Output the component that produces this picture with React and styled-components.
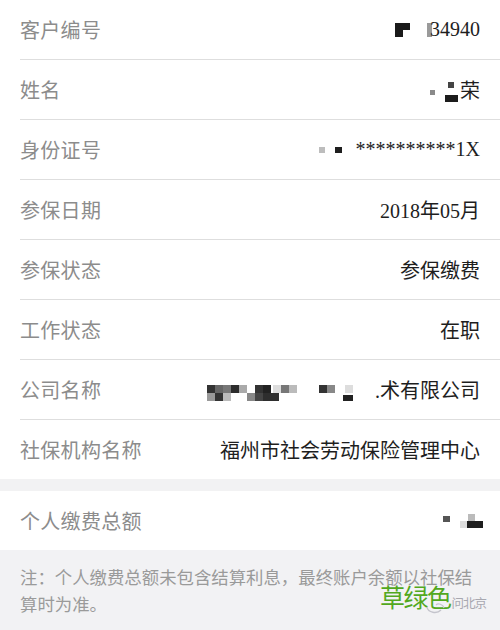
import React from 'react';
import styled, { createGlobalStyle } from 'styled-components';

const GlobalStyle = createGlobalStyle`
  html, body {
    margin: 0;
    padding: 0;
    background: #ffffff;
  }
  body {
    font-family: "Noto Sans CJK SC", "Noto Sans", sans-serif;
  }
`;

const Page = styled.div`
  position: relative;
  width: 500px;
  height: 630px;
  overflow: hidden;
  background: #f2f2f4;
`;

const List = styled.div`
  background: #ffffff;
  display: flex;
  flex-direction: column;
`;

const Row = styled.div`
  height: ${(props) => props.h || 59}px;
  margin-left: 20px;
  padding-right: 20px;
  display: flex;
  align-items: center;
  justify-content: space-between;
  border-bottom: ${(props) => (props.last ? '0' : '1px solid #dedede')};
`;

const Label = styled.span`
  font-size: 20px;
  color: #8c8c8c;
  letter-spacing: 0.3px;
`;

const Value = styled.span`
  display: flex;
  align-items: center;
  font-family: "Liberation Serif", "Noto Sans CJK SC", serif;
  font-size: 20px;
  color: #1e1e1e;
  white-space: nowrap;
`;

const Gap = styled.div`
  height: 12px;
  background: #f2f2f3;
`;

const Total = styled.div`
  background: #ffffff;
`;

const Note = styled.p`
  margin: 0;
  padding: 13px 20px 0 20px;
  font-size: 17.4px;
  line-height: 27px;
  color: #9a9a9a;
`;

/* watermark stamped over the note area */
const Watermark = styled.div`
  position: absolute;
  left: 380px;
  top: 581px;
  display: flex;
  align-items: flex-end;
  white-space: nowrap;
`;

const Brand = styled.span`
  font-size: 25px;
  line-height: 30px;
  color: #52a81e;
  letter-spacing: -1.5px;
`;

const Source = styled.span`
  font-size: 12.5px;
  line-height: 16px;
  margin-left: 1px;
  color: #a8a8b0;
  letter-spacing: -1px;
`;

const SourceIcon = styled.svg`
  position: absolute;
  left: 46px;
  top: 20px;
`;

function Mosaic({ width, height, cells, style }) {
  return (
    <svg width={width} height={height} style={style}>
      {cells.map(([x, y, w, h, c], i) => (
        <rect key={i} x={x} y={y} width={w} height={h} fill={c} />
      ))}
    </svg>
  );
}

const customerCells = [
  [0, 0, 15, 7, '#1a1a1a'],
  [0, 7, 8, 7, '#1a1a1a'],
  [32, 0, 5, 14, '#9a9a9a'],
];

const nameCells = [
  [0, 8, 5, 5, '#8a8a8a'],
  [18, 0, 6, 6, '#444'],
  [15, 13, 13, 7, '#1c1c1c'],
];

const idCells = [
  [0, 0, 6, 6, '#bdbdbd'],
  [16, 0, 7, 6, '#1e1e1e'],
];

const companyCells = [
  [0, 0, 8, 8, '#333'], [8, 0, 8, 8, '#666'], [16, 0, 8, 8, '#777'],
  [24, 0, 8, 8, '#2c2c2c'], [32, 0, 8, 8, '#aaa'], [48, 0, 8, 8, '#333'],
  [56, 0, 8, 8, '#222'], [66, 0, 8, 8, '#ddd'], [74, 0, 8, 8, '#777'],
  [82, 0, 8, 8, '#bbb'], [112, 0, 8, 8, '#333'], [120, 0, 8, 8, '#888'],
  [138, 0, 8, 8, '#ddd'],
  [0, 8, 8, 8, '#999'], [8, 8, 8, 8, '#333'], [16, 8, 8, 8, '#bbb'],
  [40, 8, 8, 8, '#888'], [48, 8, 8, 8, '#444'], [56, 8, 16, 8, '#2e2e2e'],
  [136, 10, 10, 6, '#222'],
];

const totalCells = [
  [0, 2, 7, 6, '#555'],
  [25, 0, 7, 7, '#bbb'],
  [17, 7, 7, 7, '#ddd'],
  [24, 7, 16, 7, '#1e1e1e'],
];

const rows = [
  {
    label: '客户编号',
    value: (
      <>
        <Mosaic width={37} height={14} cells={customerCells} style={{ marginRight: -2 }} />
        34940
      </>
    ),
  },
  {
    label: '姓名',
    value: (
      <>
        <Mosaic width={29} height={20} cells={nameCells} style={{ marginRight: 1, marginTop: 4 }} />
        荣
      </>
    ),
  },
  {
    label: '身份证号',
    value: (
      <>
        <Mosaic width={23} height={6} cells={idCells} style={{ marginRight: 14 }} />
        **********1X
      </>
    ),
  },
  { label: '参保日期', value: '2018年05月' },
  { label: '参保状态', value: '参保缴费' },
  { label: '工作状态', value: '在职' },
  {
    label: '公司名称',
    value: (
      <>
        <Mosaic width={146} height={16} cells={companyCells} style={{ marginRight: 22, marginTop: 6 }} />
        .术有限公司
      </>
    ),
  },
  { label: '社保机构名称', value: '福州市社会劳动保险管理中心' },
];

export default function App() {
  return (
    <Page>
      <GlobalStyle />
      <List>
        {rows.map((row, i) => (
          <Row key={row.label} last={i === rows.length - 1}>
            <Label>{row.label}</Label>
            <Value>{row.value}</Value>
          </Row>
        ))}
      </List>
      <Gap />
      <Total>
        <Row h={59} last>
          <Label>个人缴费总额</Label>
          <Value>
            <Mosaic width={40} height={14} cells={totalCells} style={{ marginRight: -3 }} />
          </Value>
        </Row>
      </Total>
      <Note>注：个人缴费总额未包含结算利息，最终账户余额以社保结算时为准。</Note>
      <Watermark>
        <Brand>草绿色</Brand>
        <Source>问北京</Source>
        <SourceIcon width="20" height="14" viewBox="0 0 20 14">
          <path d="M1 6 C2 12 11 13 15 9" stroke="#c4c4cc" strokeWidth="1.4" fill="none" />
          <path d="M10 4 C12 2 17 3 18 7" stroke="#c4c4cc" strokeWidth="1.2" fill="none" />
        </SourceIcon>
      </Watermark>
    </Page>
  );
}
